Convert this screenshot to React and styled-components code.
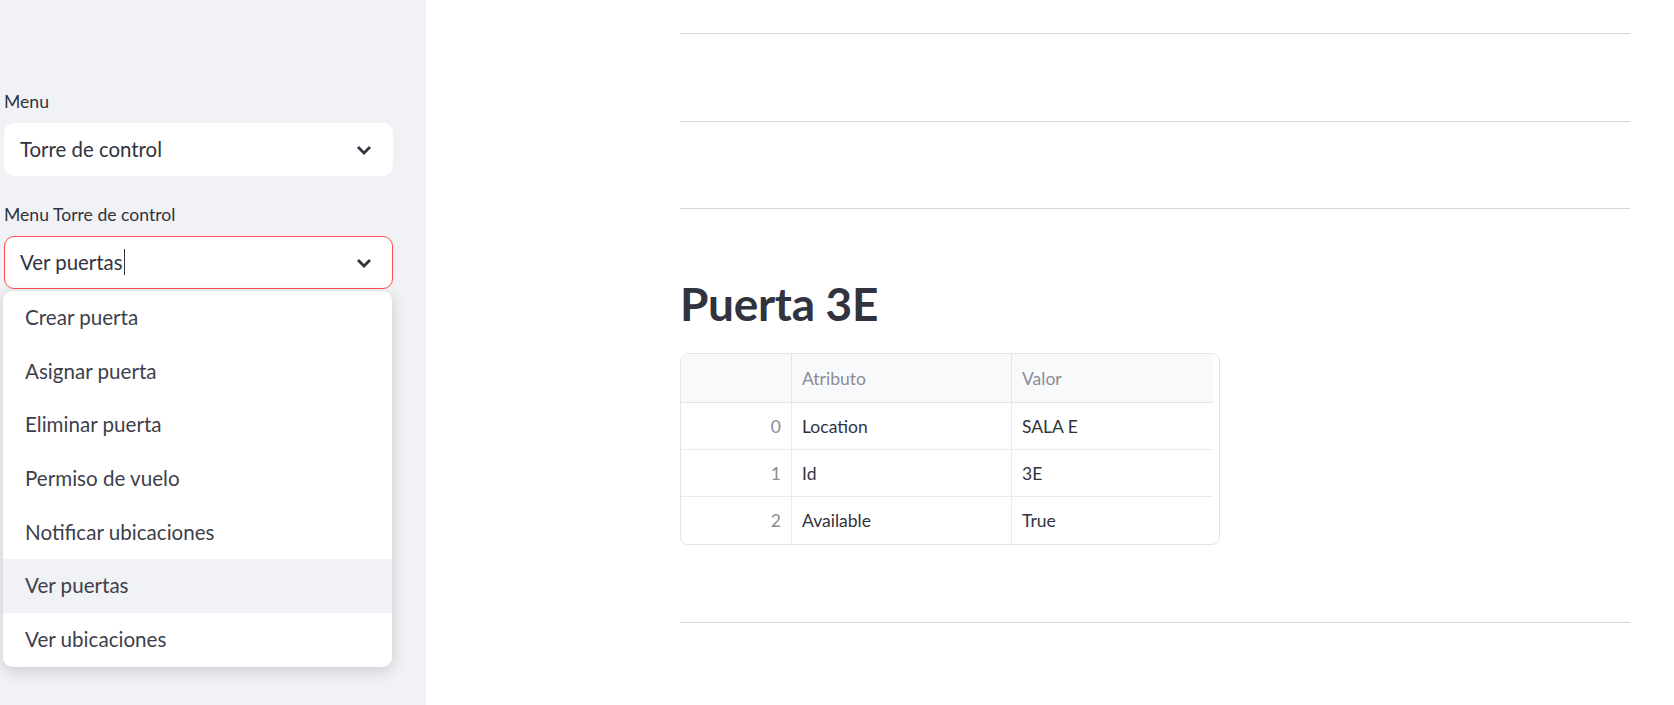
import React from "react";
import styled, { createGlobalStyle } from "styled-components";

const GlobalStyle = createGlobalStyle`
    html, body {
        margin: 0;
        padding: 0;
        background: #ffffff;
    }
    body {
        font-family: "Lato", "Noto Sans", sans-serif;
        color: #31333f;
    }
`;

const MENU_OPTIONS = [
    "Crear puerta",
    "Asignar puerta",
    "Eliminar puerta",
    "Permiso de vuelo",
    "Notificar ubicaciones",
    "Ver puertas",
    "Ver ubicaciones",
];

const ROWS = [
    { idx: 0, attr: "Location", value: "SALA E" },
    { idx: 1, attr: "Id", value: "3E" },
    { idx: 2, attr: "Available", value: "True" },
];

const Chevron = () => (
    <svg width="16" height="10" viewBox="0 0 16 10" fill="none">
        <path d="M2 2 L8 8 L14 2" stroke="#31333f" strokeWidth="2.8" />
    </svg>
);

const SelectBox = ({ value, focused, caret }) => (
    <Select $focused={focused}>
        <SelectValue>
            {value}
            {caret && <Caret />}
        </SelectValue>
        <Chevron />
    </Select>
);

const App = () => {
    return (
        <>
            <GlobalStyle />
            <Page>
                <Sidebar>
                    <Widget>
                        <Label>Menu</Label>
                        <SelectBox value="Torre de control" />
                    </Widget>
                    <Widget>
                        <Label>Menu Torre de control</Label>
                        <SelectBox value="Ver puertas" focused caret />
                    </Widget>
                    <Dropdown>
                        {MENU_OPTIONS.map((opt) => (
                            <Option key={opt} $active={opt === "Ver puertas"}>
                                {opt}
                            </Option>
                        ))}
                    </Dropdown>
                </Sidebar>
                <Main>
                    <Column>
                        <Divider $after={87} />
                        <Divider $after={86} />
                        <Divider $after={67} />
                        <Heading>Puerta 3E</Heading>
                        <Table>
                            <HeadCell />
                            <HeadCell>Atributo</HeadCell>
                            <HeadCell $last>Valor</HeadCell>
                            {ROWS.map((row, i) => (
                                <React.Fragment key={row.idx}>
                                    <IndexCell $bottom={i === ROWS.length - 1}>{row.idx}</IndexCell>
                                    <Cell $bottom={i === ROWS.length - 1}>{row.attr}</Cell>
                                    <Cell $bottom={i === ROWS.length - 1} $last>
                                        {row.value}
                                    </Cell>
                                </React.Fragment>
                            ))}
                        </Table>
                        <Divider $before={77} />
                    </Column>
                </Main>
            </Page>
        </>
    );
};

const Page = styled.div`
    display: flex;
    height: 100vh;
    min-height: 705px;
    overflow: hidden;
`;

const Sidebar = styled.aside`
    position: relative;
    flex: 0 0 426px;
    box-sizing: border-box;
    background-color: #f0f2f6;
    padding: 90px 33px 0 4px;
    display: flex;
    flex-direction: column;
    gap: 27px;
`;

const Widget = styled.div`
    display: flex;
    flex-direction: column;
`;

const Label = styled.label`
    font-size: 17.6px;
    line-height: 24px;
    margin-bottom: 9px;
    color: #31333f;
`;

const Select = styled.div`
    box-sizing: border-box;
    height: 53px;
    display: flex;
    align-items: center;
    justify-content: space-between;
    padding: 0 20px 0 15px;
    background-color: #ffffff;
    border: 1px solid ${(p) => (p.$focused ? "#ff4b4b" : "#ffffff")};
    border-radius: 10px;
`;

const SelectValue = styled.span`
    display: flex;
    align-items: center;
    font-size: 20.4px;
    color: #31333f;
    margin-top: -2px;
`;

const Caret = styled.span`
    display: inline-block;
    width: 0;
    height: 26px;
    margin-left: 1px;
    border-left: 1.5px solid #31333f;
`;

const Dropdown = styled.ul`
    position: absolute;
    top: 291px;
    left: 3px;
    width: 389px;
    margin: 0;
    padding: 0;
    list-style: none;
    background-color: #ffffff;
    border-radius: 10px;
    overflow: hidden;
    box-shadow: 0 4px 16px rgba(0, 0, 0, 0.16);
`;

const Option = styled.li`
    height: 53.7px;
    display: flex;
    align-items: center;
    padding: 0 22px 2px;
    box-sizing: border-box;
    font-size: 20.6px;
    color: #3d3f4b;
    background-color: ${(p) => (p.$active ? "#f0f2f6" : "#ffffff")};
`;

const Main = styled.main`
    flex: 1;
    box-sizing: border-box;
    background-color: #ffffff;
    padding: 33px 0 0 254px;
`;

const Column = styled.div`
    width: 950px;
    display: flex;
    flex-direction: column;
`;

const Divider = styled.hr`
    width: 100%;
    height: 1px;
    border: none;
    margin: ${(p) => p.$before || 0}px 0 ${(p) => p.$after || 0}px;
    background-color: #d6d6d9;
`;

const Heading = styled.h1`
    margin: 0 0 22px;
    font-size: 46px;
    line-height: 1.2;
    font-weight: 700;
    color: #31333f;
    letter-spacing: -0.3px;
`;

const Table = styled.div`
    box-sizing: border-box;
    width: 540px;
    display: grid;
    grid-template-columns: 111px 220px 201px;
    grid-auto-rows: 47px;
    grid-template-rows: 49px;
    border: 1px solid #e4e5e8;
    border-radius: 8px;
    overflow: hidden;
    font-size: 17.5px;
`;

const HeadCell = styled.div`
    display: flex;
    align-items: center;
    padding: 0 10px;
    background-color: #f8f9fb;
    color: #8a8c96;
    border-bottom: 1px solid #e4e5e8;
    border-right: ${(p) => (p.$last ? "none" : "1px solid #e4e5e8")};
`;

const Cell = styled.div`
    display: flex;
    align-items: center;
    padding: 0 10px;
    color: #31333f;
    border-bottom: ${(p) => (p.$bottom ? "none" : "1px solid #ebebee")};
    border-right: ${(p) => (p.$last ? "none" : "1px solid #ebebee")};
`;

const IndexCell = styled(Cell)`
    justify-content: flex-end;
    color: #8a8c96;
`;

export default App;
